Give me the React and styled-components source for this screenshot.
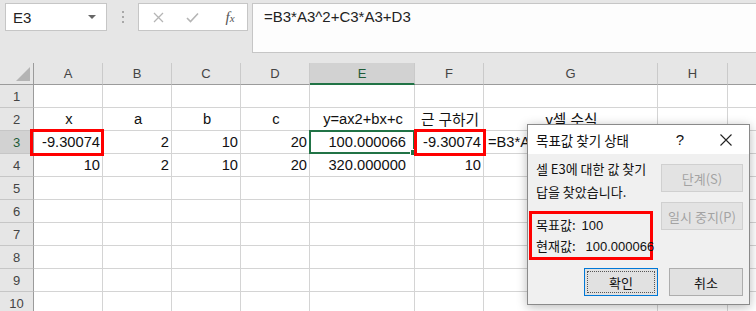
import React from "react";
import styled, { createGlobalStyle, css } from "styled-components";

const Global = createGlobalStyle`
  html, body { margin: 0; padding: 0; background: #fff; }
  body { font-family: "Liberation Sans", "Noto Sans CJK KR", sans-serif; overflow: hidden; }
  * { box-sizing: border-box; }
`;

const Page = styled.div`
  position: relative;
  width: 756px;
  height: 311px;
  overflow: hidden;
  background: #fff;
`;

const Toolbar = styled.div`
  display: flex;
  align-items: flex-start;
  height: 63px;
  padding: 3px 0 0 5px;
  background: #e6e6e6;
`;

const NameBox = styled.div`
  width: 102px;
  height: 28px;
  background: #fff;
  border: 1px solid #c6c6c6;
  display: flex;
  align-items: center;
  justify-content: space-between;
  padding: 0 10px 0 7px;
  font-size: 15px;
  color: #222;
`;

const Caret = styled.span`
  width: 0;
  height: 0;
  border-left: 4px solid transparent;
  border-right: 4px solid transparent;
  border-top: 4px solid #666;
`;

const Grip = styled.div`
  width: 31px;
  height: 28px;
  display: flex;
  flex-direction: column;
  align-items: center;
  justify-content: center;
  gap: 3px;
  & > i { width: 2px; height: 2px; background: #a8a8a8; display: block; }
`;

const FxBox = styled.div`
  width: 110px;
  height: 28px;
  background: #fff;
  border: 1px solid #c6c6c6;
  display: flex;
  align-items: center;
  padding-left: 9px;
`;

const FxIcon = styled.span`
  width: ${(p) => p.$w}px;
  display: flex;
  align-items: center;
  justify-content: center;
`;

const Fx = styled.span`
  font-family: "Liberation Serif", serif;
  font-style: italic;
  font-size: 15px;
  color: #555;
  & > small { font-size: 11px; }
`;

const FormulaBox = styled.div`
  flex: 1;
  margin-left: 4px;
  height: 50px;
  background: #fdfdfd;
  border: 1px solid #c6c6c6;
  border-right: none;
  padding: 3px 0 0 11px;
  font-size: 15px;
  line-height: 20px;
  color: #222;
`;

const Sheet = styled.div`
  display: grid;
  grid-template-columns: 34px 69px 69px 69px 69px 105px 69px 174px 70px 120px;
  grid-auto-rows: 23px;
  grid-template-rows: 22px;
  width: 868px;
`;

const Corner = styled.div`
  background: #e6e6e6;
  border-right: 1px solid #9b9b9b;
  border-bottom: 1px solid #9b9b9b;
  display: flex;
  align-items: flex-end;
  justify-content: flex-end;
  padding: 0 3px 3px 0;
`;

const ColHead = styled.div`
  background: ${(p) => (p.$active ? "#d2d2d2" : "#e6e6e6")};
  border-right: 1px solid #cacaca;
  border-bottom: ${(p) => (p.$active ? "2px solid #217346" : "1px solid #9b9b9b")};
  display: flex;
  align-items: center;
  justify-content: center;
  font-size: 13px;
  color: ${(p) => (p.$active ? "#1f5c38" : "#444")};
  padding-top: ${(p) => (p.$active ? "1px" : "0")};
`;

const RowHead = styled.div`
  background: ${(p) => (p.$active ? "#d2d2d2" : "#e6e6e6")};
  border-right: 1px solid #9b9b9b;
  border-bottom: 1px solid #c6c6c6;
  display: flex;
  align-items: center;
  justify-content: center;
  font-size: 13px;
  color: ${(p) => (p.$active ? "#1f5c38" : "#444")};
`;

const markCss = css`
  &::after {
    content: "";
    position: absolute;
    top: -2px;
    bottom: -3px;
    left: ${(p) => p.$ml}px;
    right: ${(p) => p.$mr}px;
    border: 3px solid #ff0000;
    pointer-events: none;
  }
`;

const selCss = css`
  &::before {
    content: "";
    position: absolute;
    top: -1px;
    bottom: -1px;
    left: -1px;
    right: -1px;
    border: 2px solid #217346;
  }
  &::after {
    content: "";
    position: absolute;
    width: 5px;
    height: 5px;
    right: -3px;
    bottom: -3px;
    background: #217346;
    border: 1px solid #fff;
  }
`;

const Cell = styled.div`
  position: relative;
  border-right: 1px solid #d4d4d4;
  border-bottom: 1px solid #d4d4d4;
  display: flex;
  align-items: center;
  justify-content: ${(p) => (p.$align === "center" ? "center" : p.$align === "left" ? "flex-start" : "flex-end")};
  padding: 0 ${(p) => p.$pr ?? 2}px 1px 4px;
  font-size: 14.7px;
  color: #111;
  white-space: nowrap;
  overflow: visible;
  z-index: ${(p) => (p.$mark || p.$sel ? 2 : 1)};
  ${(p) => p.$mark && markCss}
  ${(p) => p.$sel && selCss}
`;

const Dialog = styled.div`
  position: absolute;
  left: 527px;
  top: 124px;
  width: 223px;
  height: 181px;
  background: #f0f0f0;
  border: 1px solid #8a8a8a;
  box-shadow: 0 2px 10px rgba(0, 0, 0, 0.28);
  z-index: 10;
  display: flex;
  flex-direction: column;
  font-family: "Noto Sans CJK KR", "Liberation Sans", sans-serif;
  font-size: 13px;
  color: #111;
`;

const TitleBar = styled.div`
  height: 29px;
  background: #fff;
  display: flex;
  align-items: center;
  padding-left: 8px;
  font-size: 13.5px;
`;

const Title = styled.span`
  flex: 1;
`;

const TitleBtn = styled.span`
  width: ${(p) => p.$w}px;
  display: flex;
  align-items: center;
  justify-content: center;
  font-family: "Liberation Sans", sans-serif;
  font-size: 15px;
`;

const Body = styled.div`
  flex: 1;
  display: flex;
  flex-direction: column;
  padding: 3px 6px 8px 8px;
`;

const Upper = styled.div`
  display: flex;
  justify-content: space-between;
  flex: 1;
`;

const Info = styled.div`
  display: flex;
  flex-direction: column;
`;

const Line = styled.div`
  height: 23px;
  line-height: 23px;
  white-space: nowrap;
`;

const Result = styled.div`
  margin: 8px 0 0 -7px;
  width: 124px;
  height: 49px;
  border: 3px solid #ff0000;
  padding: 0 0 0 4px;
  & > div { height: 21px; line-height: 21px; white-space: nowrap; }
`;

const Val = styled.span`
  margin-left: ${(p) => p.$ml}px;
  font-family: "Liberation Sans", sans-serif;
  font-size: 13px;
`;

const Side = styled.div`
  display: flex;
  flex-direction: column;
  gap: 10px;
  padding-top: 7px;
`;

const Btn = styled.div`
  position: relative;
  width: ${(p) => p.$w}px;
  height: 28px;
  display: flex;
  align-items: center;
  justify-content: center;
  background: ${(p) => (p.$disabled ? "#e3e3e3" : "#e1e1e1")};
  border: 1px solid ${(p) => (p.$focus ? "#0078d7" : p.$disabled ? "#d0d0d0" : "#adadad")};
  color: ${(p) => (p.$disabled ? "#a3a3a3" : "#111")};
  font-size: 13px;
  ${(p) =>
    p.$focus &&
    css`
      &::after {
        content: "";
        position: absolute;
        inset: 2px;
        border: 1px dotted #555;
      }
    `}
`;

const Footer = styled.div`
  display: flex;
  justify-content: flex-end;
  gap: 11px;
`;

const cols = ["A", "B", "C", "D", "E", "F", "G", "H", ""];

const data = {
  2: [
    { t: "x", a: "center" },
    { t: "a", a: "center" },
    { t: "b", a: "center" },
    { t: "c", a: "center" },
    { t: "y=ax2+bx+c", a: "center" },
    { t: "근 구하기", a: "center" },
    { t: "y셀 수식", a: "center" },
  ],
  3: [
    { t: "-9.30074", mark: true, ml: -4, mr: -2 },
    { t: "2" },
    { t: "10" },
    { t: "20" },
    { t: "100.000066", sel: true, pr: 8 },
    { t: "-9.30074", mark: true, ml: -1, mr: -3 },
    { t: "=B3*A3^2+C3*A3+D3", a: "left" },
  ],
  4: [
    { t: "10" },
    { t: "2" },
    { t: "10" },
    { t: "20" },
    { t: "320.000000", pr: 8 },
    { t: "10" },
  ],
};

export default function App() {
  const rows = [];
  for (let r = 1; r <= 10; r++) {
    const rd = data[r] || [];
    rows.push(
      <RowHead key={`h${r}`} $active={r === 3}>
        {r}
      </RowHead>
    );
    cols.forEach((c, i) => {
      const d = rd[i] || {};
      rows.push(
        <Cell
          key={`c${i}-${r}`}
          $align={d.a}
          $mark={d.mark}
          $ml={d.ml}
          $mr={d.mr}
          $sel={d.sel}
          $pr={d.pr}
        >
          {d.t}
        </Cell>
      );
    });
  }

  return (
    <Page>
      <Global />
      <Toolbar>
        <NameBox>
          <span>E3</span>
          <Caret />
        </NameBox>
        <Grip>
          <i />
          <i />
          <i />
        </Grip>
        <FxBox>
          <FxIcon $w={20}>
            <svg width="11" height="11" viewBox="0 0 11 11">
              <path d="M1 1 L10 10 M10 1 L1 10" stroke="#b5b5b5" strokeWidth="1.3" fill="none" />
            </svg>
          </FxIcon>
          <FxIcon $w={48}>
            <svg width="13" height="11" viewBox="0 0 13 11">
              <path d="M1 6 L4.5 9.5 L12 1.5" stroke="#b5b5b5" strokeWidth="1.6" fill="none" />
            </svg>
          </FxIcon>
          <FxIcon $w={28}>
            <Fx>
              f<small>x</small>
            </Fx>
          </FxIcon>
        </FxBox>
        <FormulaBox>=B3*A3^2+C3*A3+D3</FormulaBox>
      </Toolbar>
      <Sheet>
        <Corner>
          <svg width="14" height="14" viewBox="0 0 14 14">
            <path d="M14 0 L14 14 L0 14 Z" fill="#b4b4b4" />
          </svg>
        </Corner>
        {cols.map((c, i) => (
          <ColHead key={`h${i}`} $active={c === "E"}>
            {c}
          </ColHead>
        ))}
        {rows}
      </Sheet>
      <Dialog>
        <TitleBar>
          <Title>목표값 찾기 상태</Title>
          <TitleBtn $w={46}>?</TitleBtn>
          <TitleBtn $w={46}>
            <svg width="12" height="12" viewBox="0 0 12 12">
              <path d="M0.5 0.5 L11.5 11.5 M11.5 0.5 L0.5 11.5" stroke="#222" strokeWidth="1.1" fill="none" />
            </svg>
          </TitleBtn>
        </TitleBar>
        <Body>
          <Upper>
            <Info>
              <Line>셀 E3에 대한 값 찾기</Line>
              <Line>답을 찾았습니다.</Line>
              <Result>
                <div>
                  목표값:<Val $ml={6}>100</Val>
                </div>
                <div>
                  현재값:<Val $ml={10}>100.000066</Val>
                </div>
              </Result>
            </Info>
            <Side>
              <Btn $w={82} $disabled>
                단계(S)
              </Btn>
              <Btn $w={82} $disabled>
                일시 중지(P)
              </Btn>
            </Side>
          </Upper>
          <Footer>
            <Btn $w={74} $focus>
              확인
            </Btn>
            <Btn $w={74}>취소</Btn>
          </Footer>
        </Body>
      </Dialog>
    </Page>
  );
}
